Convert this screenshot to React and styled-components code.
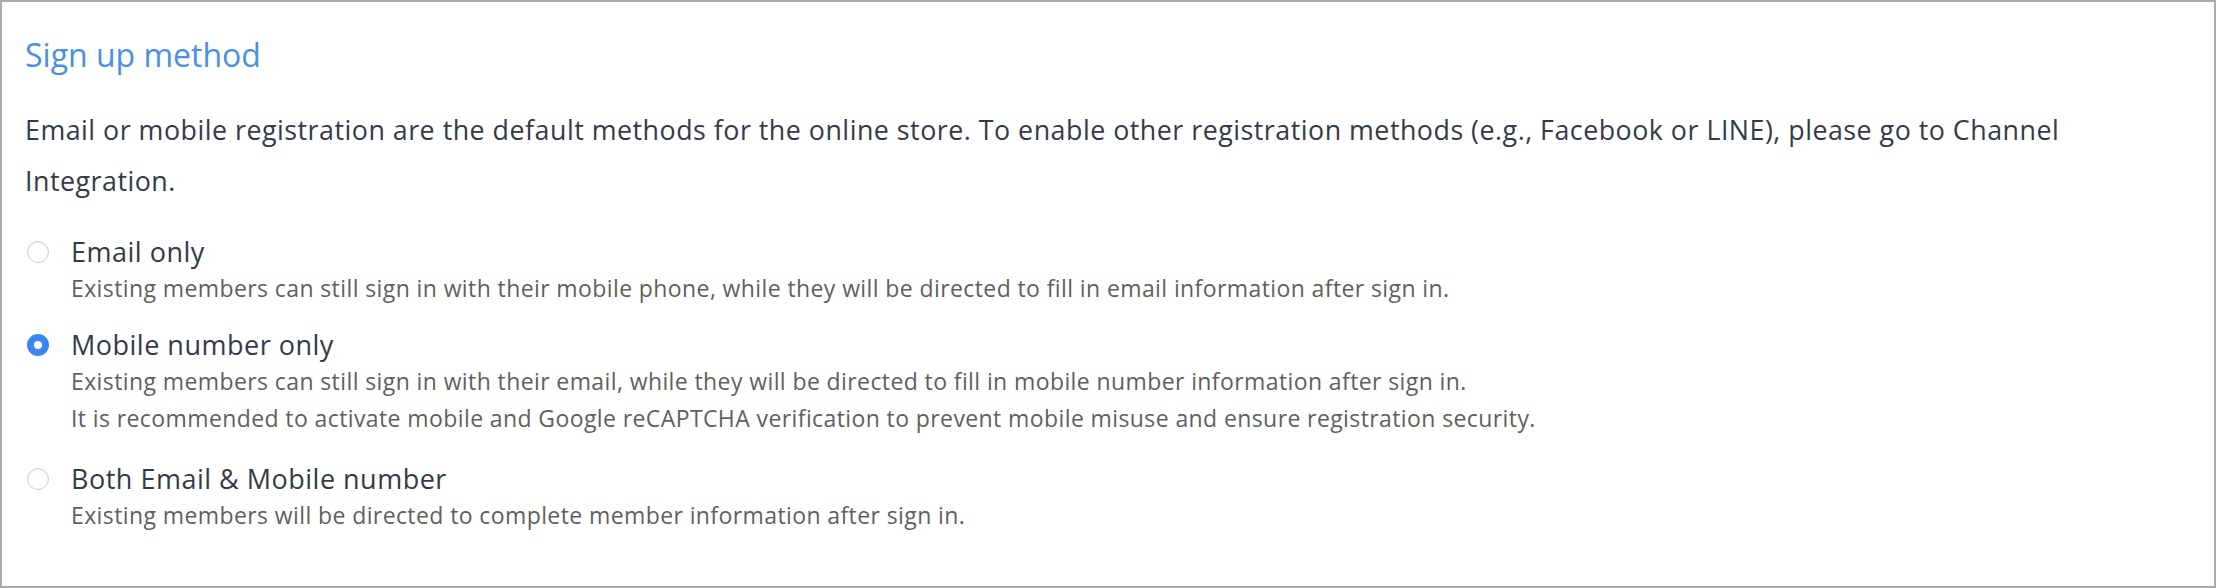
import React, { useState } from 'react'
import styled, { createGlobalStyle } from 'styled-components'

const GlobalStyle = createGlobalStyle`
  html, body {
    margin: 0;
    padding: 0;
    background: #fff;
  }
  body {
    font-family: "Open Sans", "Noto Sans", sans-serif;
  }
`

const options = [
  {
    value: 'email',
    label: 'Email only',
    hints: [
      'Existing members can still sign in with their mobile phone, while they will be directed to fill in email information after sign in.',
    ],
  },
  {
    value: 'mobile',
    label: 'Mobile number only',
    hints: [
      'Existing members can still sign in with their email, while they will be directed to fill in mobile number information after sign in.',
      'It is recommended to activate mobile and Google reCAPTCHA verification to prevent mobile misuse and ensure registration security.',
    ],
  },
  {
    value: 'both',
    label: 'Both Email & Mobile number',
    hints: ['Existing members will be directed to complete member information after sign in.'],
  },
]

const App = () => {
  const [method, setMethod] = useState('mobile')

  return (
    <>
      <GlobalStyle />
      <Panel>
        <Title>Sign up method</Title>
        <Intro>
          Email or mobile registration are the default methods for the online store. To enable other
          registration methods (e.g., Facebook or LINE), please go to Channel Integration.
        </Intro>
        <OptionList>
          {options.map((opt) => (
            <Option key={opt.value} onClick={() => setMethod(opt.value)}>
              <RadioCell>
                <Radio checked={method === opt.value} />
              </RadioCell>
              <OptionBody>
                <OptionLabel>{opt.label}</OptionLabel>
                {opt.hints.map((h) => (
                  <Hint key={h}>{h}</Hint>
                ))}
              </OptionBody>
            </Option>
          ))}
        </OptionList>
      </Panel>
    </>
  )
}

const Panel = styled.div`
  box-sizing: border-box;
  width: 2216px;
  height: 588px;
  border: 2px solid #ababab;
  padding: 32px 23px 0 23px;
  background: #fff;
`

const Title = styled.h2`
  margin: 0;
  font-size: 32px;
  line-height: 41px;
  font-weight: 400;
  color: #4a90e2;
`

const Intro = styled.p`
  margin: 29px 0 0 0;
  font-size: 26.8px;
  line-height: 51px;
  letter-spacing: 0.5px;
  color: #333a4a;
`

const OptionList = styled.div`
  display: flex;
  flex-direction: column;
  gap: 19px;
  margin-top: 27px;
`

const Option = styled.div`
  display: flex;
  align-items: flex-start;
  cursor: pointer;
`

const RadioCell = styled.div`
  width: 46px;
  height: 37px;
  display: flex;
  align-items: center;
  padding-left: 2px;
  box-sizing: border-box;
  flex-shrink: 0;
`

const Radio = styled.span`
  box-sizing: border-box;
  width: 22px;
  height: 22px;
  border-radius: 50%;
  background: #fff;
  border: ${(p) => (p.checked ? '7px solid #3b86f5' : '1px solid #cfcfcf')};
  box-shadow: ${(p) => (p.checked ? 'none' : 'inset 0 1px 2px rgba(0,0,0,0.08)')};
`

const OptionBody = styled.div`
  display: flex;
  flex-direction: column;
`

const OptionLabel = styled.div`
  font-size: 27px;
  line-height: 37px;
  letter-spacing: 0.5px;
  color: #333a4a;
`

const Hint = styled.div`
  font-size: 23px;
  line-height: 37px;
  letter-spacing: 0.4px;
  color: #5f5f5f;

  & + & {
    padding-bottom: 4px;
  }
`

export default App
